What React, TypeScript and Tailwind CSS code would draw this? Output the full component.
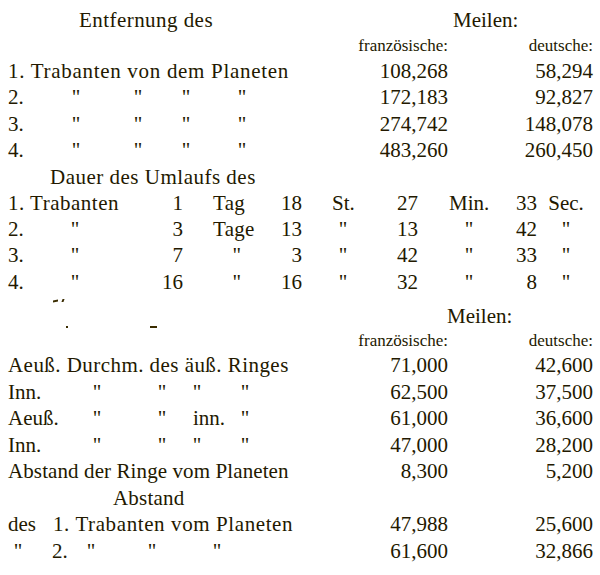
const ink = 'text-[#231900]';

const Q = ({ className = '' }: { className?: string }) => (
  <span className={`inline-block w-[20px] text-center ${className}`}>"</span>
);

const NumRow = ({
  children,
  fr,
  de,
}: {
  children?: React.ReactNode;
  fr: string;
  de: string;
}) => (
  <div className="flex h-[26.5px] leading-[26.5px] whitespace-nowrap">
    <div className="w-[340px] shrink-0 flex">{children}</div>
    <div className="w-[100px] shrink-0 text-right">{fr}</div>
    <div className="w-[145px] shrink-0 text-right">{de}</div>
  </div>
);

const SubHead = ({ h }: { h: string }) => (
  <div className={`flex text-[17px] whitespace-nowrap ${h}`}>
    <div className="w-[340px] shrink-0" />
    <div className="w-[100px] shrink-0 text-right">französische:</div>
    <div className="w-[145px] shrink-0 text-right">deutsche:</div>
  </div>
);

interface Period {
  label: string;
  d: string;
  tag: string;
  h: string;
  st: string;
  m: string;
  min: string;
  s: string;
  sec: string;
}

const periods: Period[] = [
  { label: '1. Trabanten', d: '1', tag: 'Tag', h: '18', st: 'St.', m: '27', min: 'Min.', s: '33', sec: 'Sec.' },
  { label: '2.', d: '3', tag: 'Tage', h: '13', st: '"', m: '13', min: '"', s: '42', sec: '"' },
  { label: '3.', d: '7', tag: '"', h: '3', st: '"', m: '42', min: '"', s: '33', sec: '"' },
  { label: '4.', d: '16', tag: '"', h: '16', st: '"', m: '32', min: '"', s: '8', sec: '"' },
];

const PeriodRow = ({ p, first }: { p: Period; first: boolean }) => (
  <div className="flex h-[26.25px] leading-[26.25px] whitespace-nowrap">
    {/* Trabant */}
    <div className="w-[140px] shrink-0 flex">
      {first ? (
        <span className="tracking-[0.5px]">{p.label}</span>
      ) : (
        <>
          <span className="w-[57px] shrink-0">{p.label}</span>
          <Q />
        </>
      )}
    </div>
    <div className="w-[35px] shrink-0 text-right">{p.d}</div>
    {/* Tag */}
    <div className="w-[79px] shrink-0 pl-[30px] tracking-[0.3px]">
      {p.tag === '"' ? <span className="inline-block w-[48px] text-center">"</span> : p.tag}
    </div>
    <div className="w-[40px] shrink-0 text-right">{p.h}</div>
    <div className="w-[80px] shrink-0 pl-[30px]">
      <span className="inline-block w-[22px] text-center">{p.st}</span>
    </div>
    <div className="w-[36px] shrink-0 text-right">{p.m}</div>
    <div className="w-[71px] shrink-0 pl-[31px]">
      <span className="inline-block w-[40px] text-center">{p.min}</span>
    </div>
    <div className="w-[48px] shrink-0 text-right">{p.s}</div>
    <div className="pl-[11px]">
      <span className="inline-block w-[36px] text-center">{p.sec}</span>
    </div>
  </div>
);

const App = () => {
  return (
    <div
      className={`w-[600px] h-[575px] overflow-hidden bg-white pl-[8px] pt-[7px] text-[21px] ${ink}`}
      style={{ fontFamily: '"Liberation Serif", "Times New Roman", serif' }}
    >
      {/* Entfernung der Trabanten */}
      <div className="flex h-[26.5px] leading-[26.5px] whitespace-nowrap">
        <div className="w-[340px] shrink-0 pl-[71px] tracking-[0.45px]">Entfernung des</div>
        <div className="pl-[105px]">Meilen:</div>
      </div>
      <SubHead h="h-[24px] leading-[24px]" />
      <NumRow fr="108,268" de="58,294">
        <span className="tracking-[0.7px]">1. Trabanten von dem Planeten</span>
      </NumRow>
      {[
        ['2.', '172,183', '92,827'],
        ['3.', '274,742', '148,078'],
        ['4.', '483,260', '260,450'],
      ].map(([n, fr, de]) => (
        <NumRow key={n} fr={fr} de={de}>
          <span className="w-[58px] shrink-0">{n}</span>
          <Q />
          <Q className="ml-[42px]" />
          <Q className="ml-[28px]" />
          <Q className="ml-[36px]" />
        </NumRow>
      ))}

      {/* Umlaufszeiten */}
      <div className="h-[26.25px] leading-[26.25px] pl-[42px] whitespace-nowrap tracking-[0.5px]">
        Dauer des Umlaufs des
      </div>
      {periods.map((p, i) => (
        <PeriodRow key={i} p={p} first={i === 0} />
      ))}

      {/* Reste einer verdeckten Zeile */}
      <div className="flex items-end h-[8px] pb-[0.5px]">
        <span className="ml-[45px] w-[5px] h-[2px] bg-[#3a2c00] -skew-y-12" />
        <span className="ml-[4px] w-[2px] h-[3px] bg-[#3a2c00] skew-x-[-20deg]" />
      </div>

      {/* Ringe */}
      <div className="flex h-[26.5px] leading-[26.5px] whitespace-nowrap">
        <div className="w-[340px] shrink-0 flex items-end pb-[1px]">
          <span className="ml-[58px] w-[2px] h-[2px] bg-[#3a2c00]" />
          <span className="ml-[82px] w-[7px] h-[2px] bg-[#3a2c00]" />
        </div>
        <div className="pl-[99px]">Meilen:</div>
      </div>
      <SubHead h="h-[23px] leading-[23px]" />
      <NumRow fr="71,000" de="42,600">
        <span className="tracking-[0.45px]">Aeuß. Durchm. des äuß. Ringes</span>
      </NumRow>
      <NumRow fr="62,500" de="37,500">
        <span className="w-[79px] shrink-0">Inn.</span>
        <Q />
        <Q className="ml-[45px]" />
        <Q className="ml-[15px]" />
        <Q className="ml-[28px]" />
      </NumRow>
      <NumRow fr="61,000" de="36,600">
        <span className="w-[79px] shrink-0">Aeuß.</span>
        <Q />
        <Q className="ml-[45px]" />
        <span className="ml-[21px] w-[32px] shrink-0">inn.</span>
        <Q className="ml-[10px]" />
      </NumRow>
      <NumRow fr="47,000" de="28,200">
        <span className="w-[79px] shrink-0">Inn.</span>
        <Q />
        <Q className="ml-[45px]" />
        <Q className="ml-[15px]" />
        <Q className="ml-[28px]" />
      </NumRow>
      <NumRow fr="8,300" de="5,200">
        <span className="tracking-[0.1px]">Abstand der Ringe vom Planeten</span>
      </NumRow>
      <NumRow fr="" de="">
        <span className="pl-[105px] tracking-[0.2px]">Abstand</span>
      </NumRow>
      <NumRow fr="47,988" de="25,600">
        <span className="w-[45px] shrink-0">des</span>
        <span className="tracking-[0.6px]">1. Trabanten vom Planeten</span>
      </NumRow>
      <NumRow fr="61,600" de="32,866">
        <Q />
        <span className="ml-[24px] w-[16px] shrink-0">2.</span>
        <Q className="ml-[13px]" />
        <Q className="ml-[41px]" />
        <Q className="ml-[45px]" />
      </NumRow>
    </div>
  );
};

export default App;
